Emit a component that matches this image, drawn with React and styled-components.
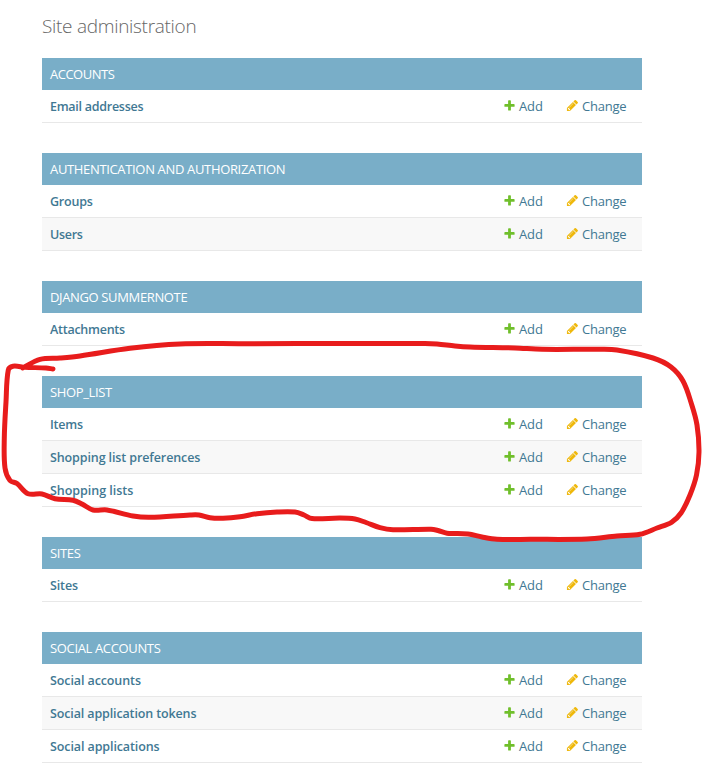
import React from "react";
import styled, { createGlobalStyle } from "styled-components";

const GlobalStyle = createGlobalStyle`
  body {
    margin: 0;
    background: #fff;
    font-family: "Open Sans", "Noto Sans", sans-serif;
    font-size: 13px;
    color: #417893;
  }
`;

const Page = styled.main`
  position: relative;
  box-sizing: border-box;
  width: 702px;
  height: 772px;
  overflow: hidden;
  padding: 14px 60px 0 42px;
`;

const Title = styled.h1`
  margin: 0 0 18px;
  height: 26px;
  line-height: 25px;
  font-size: 19px;
  font-weight: 300;
  color: #666;
  letter-spacing: -0.3px;
`;

const Module = styled.section`
  margin-bottom: 30px;
`;

const Caption = styled.h2`
  margin: 0;
  height: 32px;
  padding: 0 8px;
  line-height: 33px;
  font-size: 13px;
  font-weight: 400;
  letter-spacing: ${(p) => p.$tracking}px;
  color: #fff;
  background: #79aec8;
  text-transform: uppercase;
  white-space: nowrap;
`;

const Row = styled.div`
  display: grid;
  grid-template-columns: 1fr 63px 68px;
  box-sizing: border-box;
  height: 33px;
  padding: 0 8px;
  line-height: 33px;
  border-bottom: 1px solid #e8e8e8;
  background: #fff;

  &:nth-child(odd) {
    background: #f8f8f8;
  }
`;

const ModelName = styled.span`
  font-size: 12.5px;
  font-weight: 600;
  letter-spacing: ${(p) => p.$tracking}px;
  white-space: nowrap;
`;

const Action = styled.span`
  display: flex;
  gap: 3px;
  letter-spacing: ${(p) => p.$tracking}px;
  white-space: nowrap;

  svg {
    flex: none;
    margin-top: 9px;
  }
`;

const Annotation = styled.svg`
  position: absolute;
  inset: 0;
  pointer-events: none;
`;

const PlusIcon = () => (
  <svg width="13" height="13" viewBox="0 0 1792 1792">
    <path
      fill="#70bf2b"
      d="M1600 796v192q0 40-28 68t-68 28h-416v416q0 40-28 68t-68 28h-192q-40 0-68-28t-28-68v-416h-416q-40 0-68-28t-28-68v-192q0-40 28-68t68-28h416v-416q0-40 28-68t68-28h192q40 0 68 28t28 68v416h416q40 0 68 28t28 68z"
    />
  </svg>
);

const PencilIcon = () => (
  <svg width="13" height="13" viewBox="0 0 1792 1792">
    <path
      fill="#efb80b"
      d="M491 1536l91-91-235-235-91 91v107h128v128h107zm523-928q0-22-22-22-10 0-17 7l-542 542q-7 7-7 17 0 22 22 22 10 0 17-7l542-542q7-7 7-17zm-54-192l416 416-832 832h-416v-416zm683 96q0 53-37 90l-166 166-416-416 166-165q36-38 90-38 53 0 91 38l235 234q37 39 37 91z"
    />
  </svg>
);

const apps = [
  { name: "Accounts", tracking: -0.5, models: [["Email addresses", -0.27]] },
  {
    name: "Authentication and Authorization",
    tracking: -0.34,
    models: [["Groups", -0.2], ["Users", -0.3]],
  },
  { name: "Django Summernote", tracking: -0.36, models: [["Attachments", -0.25]] },
  {
    name: "Shop_List",
    tracking: -0.36,
    models: [["Items", -0.22], ["Shopping list preferences", -0.11], ["Shopping lists", -0.03]],
  },
  { name: "Sites", tracking: -0.36, models: [["Sites", -0.14]] },
  {
    name: "Social Accounts",
    tracking: -0.35,
    models: [["Social accounts", -0.1], ["Social application tokens", -0.13], ["Social applications", -0.1]],
  },
];

// Points of the hand-drawn loop, in drawing order.
const loop = [
  [53, 369], [46, 368], [25, 367.3], [13, 366.2], [8.3, 370], [6, 402], [4.3, 438], [5, 468],
  [10, 480.5], [17, 483.5], [28, 493.7], [42, 494], [55, 498.7], [73, 500.3], [82, 504], [93, 510],
  [107, 510], [133, 516], [150, 517.3], [190, 515], [199, 515], [210, 517.7], [223, 518.2],
  [240, 516.7], [257, 513.7], [277, 512], [295, 512], [304, 515], [312, 518.6], [340, 518], [355, 519],
  [366, 522.5], [380, 527.7], [393, 529.8], [431, 529.2], [438, 530.5], [447, 533.2], [468, 534],
  [482, 537], [497, 539.2], [530, 539.3], [587, 539], [617, 536], [640, 534.3], [657, 528],
  [671.5, 522.3], [681, 513], [690, 495], [696.5, 475], [699, 452], [697, 425], [691.5, 404],
  [683, 381], [671, 367], [653, 358], [617, 350], [600, 349.3], [542, 349.3], [515, 348], [470, 347],
  [455, 346], [437, 344], [425, 343.6], [240, 343.7], [180, 344], [130, 348.3], [80, 356],
  [60, 358], [40, 359.3], [22.5, 368],
];

// Catmull-Rom spline through the points, with tangents limited by segment length.
const smooth = (pts) => {
  const dist = (a, b) => Math.hypot(b[0] - a[0], b[1] - a[1]);
  const unit = (i) => {
    const a = pts[Math.max(i - 1, 0)];
    const b = pts[Math.min(i + 1, pts.length - 1)];
    const d = dist(a, b);
    return [(b[0] - a[0]) / d, (b[1] - a[1]) / d];
  };
  let d = `M${pts[0]}`;
  for (let i = 0; i < pts.length - 1; i++) {
    const p = pts[i];
    const q = pts[i + 1];
    const k = dist(p, q) / 3;
    const [ux, uy] = unit(i);
    const [vx, vy] = unit(i + 1);
    d += `C${p[0] + ux * k} ${p[1] + uy * k} ${q[0] - vx * k} ${q[1] - vy * k} ${q}`;
  }
  return d;
};

export default function App() {
  return (
    <>
      <GlobalStyle />
      <Page>
        <Title>Site administration</Title>
        {apps.map((app) => (
          <Module key={app.name}>
            <Caption $tracking={app.tracking}>{app.name}</Caption>
            {app.models.map(([name, tracking]) => (
              <Row key={name}>
                <ModelName $tracking={tracking}>{name}</ModelName>
                <Action $tracking={-0.1}>
                  <PlusIcon />
                  Add
                </Action>
                <Action $tracking={-0.22}>
                  <PencilIcon />
                  Change
                </Action>
              </Row>
            ))}
          </Module>
        ))}
        <Annotation width="702" height="772" viewBox="0 0 702 772">
          <path
            d={smooth(loop)}
            fill="none"
            stroke="#e81c1c"
            strokeWidth="5"
            strokeLinecap="round"
            strokeLinejoin="round"
          />
        </Annotation>
      </Page>
    </>
  );
}
